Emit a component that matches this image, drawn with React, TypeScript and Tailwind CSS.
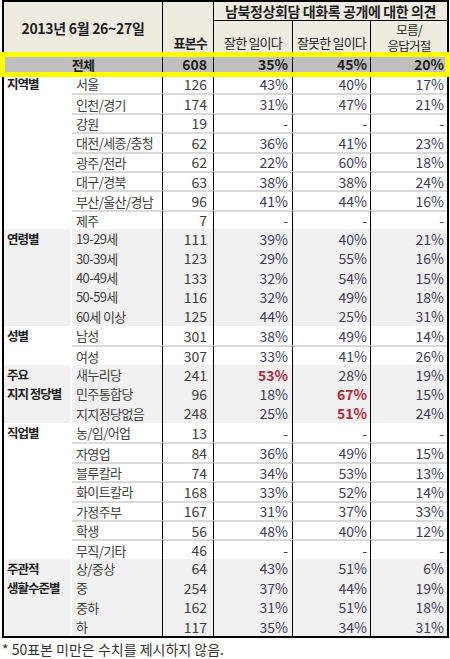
import React from "react";

type Row = [string, string, string, string, string];
type Section = { label: string[]; gray: boolean; rows: Row[] };

const sections: Section[] = [
  {
    label: ["지역별"],
    gray: false,
    rows: [
      ["서울", "126", "43%", "40%", "17%"],
      ["인천/경기", "174", "31%", "47%", "21%"],
      ["강원", "19", "-", "-", "-"],
      ["대전/세종/충청", "62", "36%", "41%", "23%"],
      ["광주/전라", "62", "22%", "60%", "18%"],
      ["대구/경북", "63", "38%", "38%", "24%"],
      ["부산/울산/경남", "96", "41%", "44%", "16%"],
      ["제주", "7", "-", "-", "-"],
    ],
  },
  {
    label: ["연령별"],
    gray: true,
    rows: [
      ["19-29세", "111", "39%", "40%", "21%"],
      ["30-39세", "123", "29%", "55%", "16%"],
      ["40-49세", "133", "32%", "54%", "15%"],
      ["50-59세", "116", "32%", "49%", "18%"],
      ["60세 이상", "125", "44%", "25%", "31%"],
    ],
  },
  {
    label: ["성별"],
    gray: false,
    rows: [
      ["남성", "301", "38%", "49%", "14%"],
      ["여성", "307", "33%", "41%", "26%"],
    ],
  },
  {
    label: ["주요", "지지 정당별"],
    gray: true,
    rows: [
      ["새누리당", "241", "!53%", "28%", "19%"],
      ["민주통합당", "96", "18%", "!67%", "15%"],
      ["지지정당없음", "248", "25%", "!51%", "24%"],
    ],
  },
  {
    label: ["직업별"],
    gray: false,
    rows: [
      ["농/임/어업", "13", "-", "-", "-"],
      ["자영업", "84", "36%", "49%", "15%"],
      ["블루칼라", "74", "34%", "53%", "13%"],
      ["화이트칼라", "168", "33%", "52%", "14%"],
      ["가정주부", "167", "31%", "37%", "33%"],
      ["학생", "56", "48%", "40%", "12%"],
      ["무직/기타", "46", "-", "-", "-"],
    ],
  },
  {
    label: ["주관적", "생활수준별"],
    gray: true,
    rows: [
      ["상/중상", "64", "43%", "51%", "6%"],
      ["중", "254", "37%", "44%", "19%"],
      ["중하", "162", "31%", "51%", "18%"],
      ["하", "117", "35%", "34%", "31%"],
    ],
  },
];

function Pct({ v }: { v: string }) {
  const red = v.startsWith("!");
  const t = red ? v.slice(1) : v;
  return red ? (
    <span className="font-bold text-[#b02a3a]">{t}</span>
  ) : (
    <span className="text-[#3d3a55]">{t}</span>
  );
}

export default function App() {
  return (
    <div
      className="relative w-[450px] h-[659px] bg-white overflow-hidden"
      style={{ fontFamily: '"Noto Sans CJK KR", "Noto Sans", sans-serif' }}
    >
      <div className="ml-[2px] w-[447px] border-2 border-black text-[14px]">
        {/* Header */}
        <div className="flex h-[52px] bg-[#eeece1] font-bold text-[#1e1e1e] text-[13px] tracking-[-0.8px]">
          <div className="w-[159px] border-r border-black flex items-center justify-center leading-none text-[14px] tracking-[-0.3px]">
            2013년 6월 26~27일
          </div>
          <div className="w-[51px] border-r border-black flex items-end justify-end pr-[6px] pb-[3px] leading-[16px]">
            표본수
          </div>
          <div className="flex-1 flex flex-col">
            <div className="h-[19px] border-b border-black flex items-center justify-center leading-none whitespace-nowrap text-[14px] tracking-[-0.4px]">
              남북정상회담 대화록 공개에 대한 의견
            </div>
            <div className="flex-1 flex font-normal">
              <div className="w-[79px] border-r border-black flex items-end justify-center pb-[3px] leading-[16px] whitespace-nowrap">
                잘한 일이다
              </div>
              <div className="w-[78px] border-r border-black flex items-end justify-center pb-[3px] leading-[16px] whitespace-nowrap">
                잘못한 일이다
              </div>
              <div className="flex-1 flex flex-col items-center justify-end text-[12.5px] leading-[16px]">
                <div>모름/</div>
                <div>응답거절</div>
              </div>
            </div>
          </div>
        </div>

        {/* Total row */}
        <div className="flex h-[20px] bg-[#bfbfbf] font-bold text-[#1e1e1e] leading-none">
          <div className="w-[159px] border-r border-black flex items-center justify-center text-[13px] tracking-[-0.8px]">
            전체
          </div>
          <div className="w-[51px] border-r border-black flex items-center justify-end pr-[6px]">
            608
          </div>
          <div className="w-[79px] border-r border-black flex items-center justify-end pr-[4px]">
            35%
          </div>
          <div className="w-[78px] border-r border-black flex items-center justify-end pr-[3px]">
            45%
          </div>
          <div className="flex-1 flex items-center justify-end pr-[3px]">20%</div>
        </div>

        {/* Body */}
        {sections.map((s, si) => (
          <div
            key={si}
            className={`flex ${s.gray ? "bg-[#f1f1f1]" : "bg-white"}`}
          >
            <div
              className={`w-[68px] shrink-0 pl-[3px] font-bold text-[#1e1e1e] text-[12.5px] tracking-[-1px] leading-[19.4px] ${
                s.gray ? "border-r-2 border-white" : ""
              }`}
            >
              {s.label.map((l, li) => (
                <div key={li} className="whitespace-nowrap">
                  {l}
                </div>
              ))}
            </div>
            <div className="flex-1 flex flex-col">
              {s.rows.map((r, ri) => {
                const sep = !s.gray && ri > 0;
                const b = sep ? "border-t-2 border-t-[#d9d9d9]" : "";
                return (
                  <div key={ri} className="flex h-[19.4px] leading-none">
                    <div
                      className={`w-[91px] border-r border-r-black flex items-center pl-[4px] text-[#404040] text-[13px] tracking-[-0.6px] whitespace-nowrap ${b}`}
                    >
                      {r[0]}
                    </div>
                    <div
                      className={`w-[51px] border-r border-r-black flex items-center justify-end pr-[6px] text-[#404040] ${b}`}
                    >
                      {r[1]}
                    </div>
                    <div
                      className={`w-[79px] border-r border-r-black flex items-center justify-end pr-[4px] ${b}`}
                    >
                      <Pct v={r[2]} />
                    </div>
                    <div
                      className={`w-[78px] border-r border-r-black flex items-center justify-end pr-[3px] ${b}`}
                    >
                      <Pct v={r[3]} />
                    </div>
                    <div className={`flex-1 flex items-center justify-end pr-[3px] ${b}`}>
                      <Pct v={r[4]} />
                    </div>
                  </div>
                );
              })}
            </div>
          </div>
        ))}
      </div>

      <div className="pl-[2px] pt-[2px] text-[14px] leading-[19px] text-[#333333]">
        * 50표본 미만은 수치를 제시하지 않음.
      </div>

      {/* Yellow highlight box over total row */}
      <div className="absolute left-0 top-[52px] w-[450px] h-[25px] border-[5px] border-[#ffff00] pointer-events-none" />
    </div>
  );
}
